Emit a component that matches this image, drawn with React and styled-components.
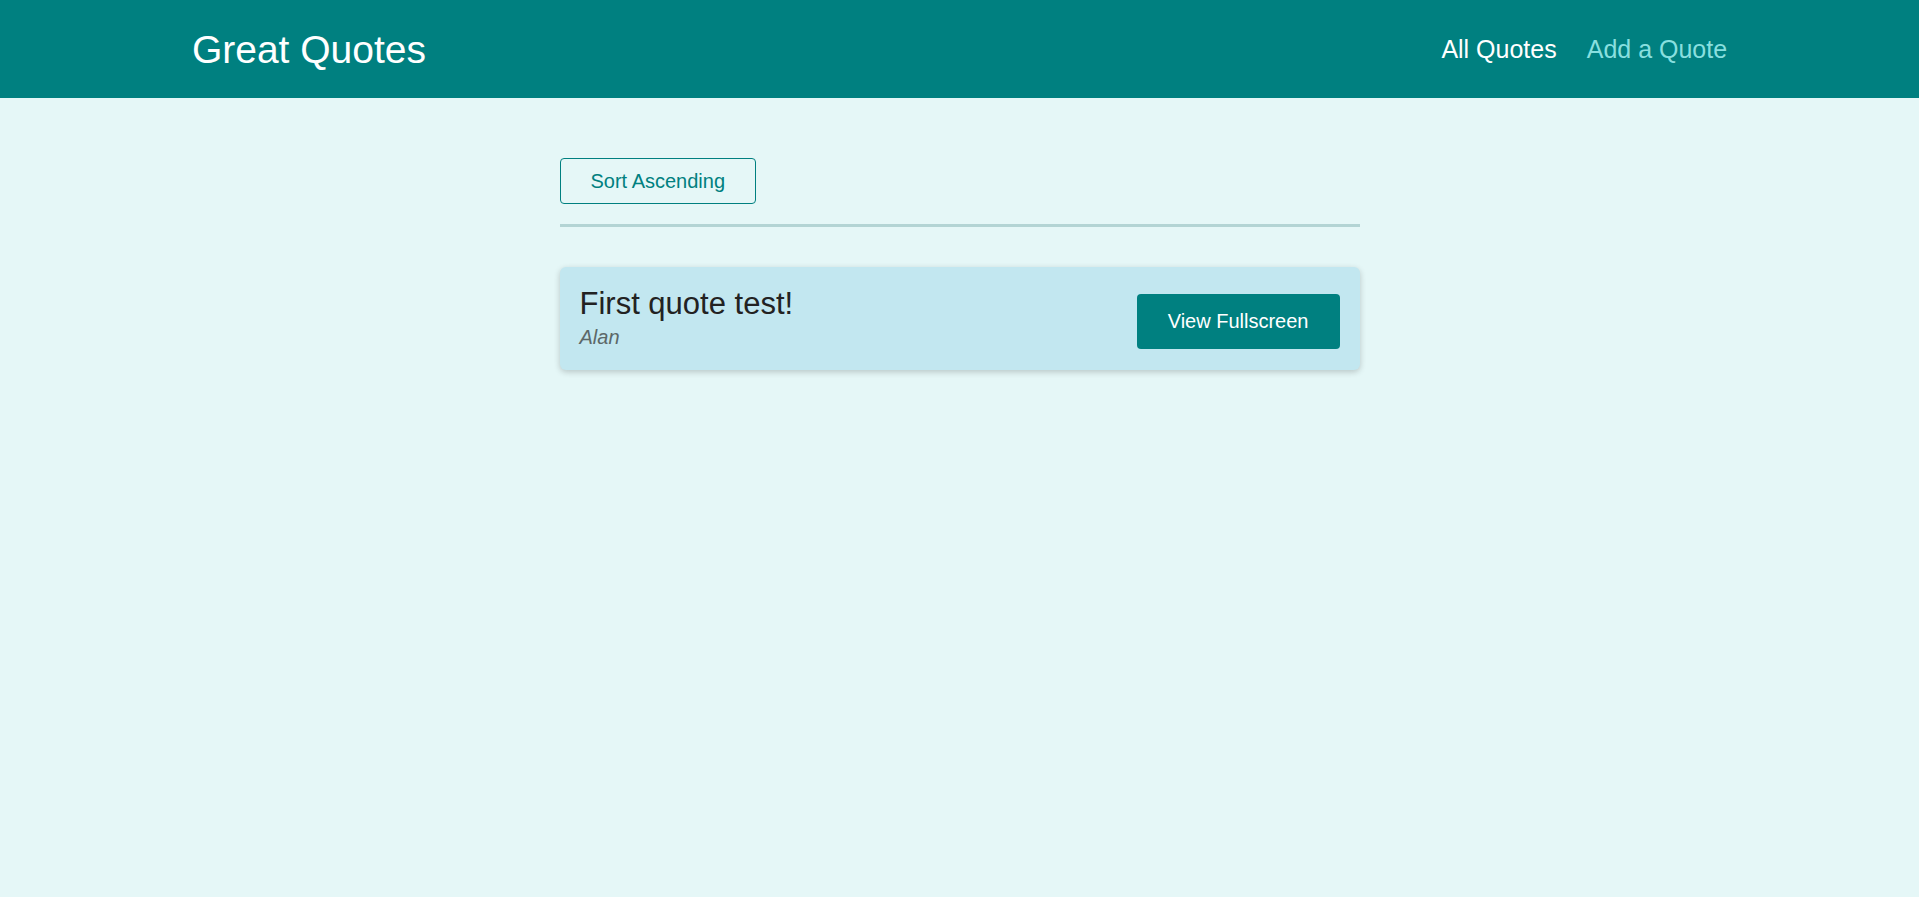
import styled, { createGlobalStyle } from "styled-components";

const GlobalStyle = createGlobalStyle`
  * {
    box-sizing: border-box;
  }

  html,
  body {
    margin: 0;
    min-height: 100%;
  }

  body {
    font-family: "Liberation Sans", Arial, sans-serif;
    background-color: #e5f7f7;
  }
`;

const Header = styled.header`
  height: 98px;
  background-color: #008080;
  padding: 0 10%;
  display: flex;
  justify-content: space-between;
  align-items: center;
`;

const Logo = styled.div`
  color: white;
  font-size: 39px;
  line-height: 1;
`;

const Nav = styled.nav`
  display: flex;
  gap: 30px;
`;

const NavLink = styled.a`
  font-size: 25px;
  text-decoration: none;
  cursor: pointer;
  color: ${(props) => (props.active ? "white" : "#88dfdf")};
`;

const Main = styled.main`
  width: 800px;
  margin: 60px auto 0;
`;

const Sorting = styled.div`
  padding-bottom: 20px;
  border-bottom: 3px solid #b3d4d4;
  margin-bottom: 40px;
`;

const OutlineButton = styled.button`
  font: inherit;
  font-size: 20px;
  line-height: 24px;
  color: #008080;
  background: transparent;
  border: 1px solid #008080;
  border-radius: 4px;
  padding: 10px 30px;
  cursor: pointer;
`;

const QuoteList = styled.ul`
  list-style: none;
  margin: 0;
  padding: 0;
`;

const QuoteItem = styled.li`
  display: flex;
  justify-content: space-between;
  align-items: flex-end;
  background-color: #c2e7f0;
  border-radius: 6px;
  padding: 19px 20px 21px 20px;
  box-shadow: 0 2px 6px rgba(0, 0, 0, 0.2);
  margin-bottom: 20px;
`;

const Figure = styled.figure`
  margin: 0;
`;

const QuoteText = styled.blockquote`
  margin: 0 0 4px 0;
  font-size: 31px;
  color: #222;
`;

const Author = styled.figcaption`
  font-size: 20px;
  font-style: italic;
  color: #5c6868;
`;

const SolidButton = styled.a`
  display: inline-block;
  font-size: 20px;
  line-height: 23px;
  color: white;
  background-color: #008080;
  border-radius: 4px;
  padding: 16px 31px;
  text-decoration: none;
  cursor: pointer;
`;

const quotes = [{ id: "q1", text: "First quote test!", author: "Alan" }];

function App() {
  return (
    <>
      <GlobalStyle />
      <Header>
        <Logo>Great Quotes</Logo>
        <Nav>
          <NavLink active>All Quotes</NavLink>
          <NavLink>Add a Quote</NavLink>
        </Nav>
      </Header>
      <Main>
        <Sorting>
          <OutlineButton>Sort Ascending</OutlineButton>
        </Sorting>
        <QuoteList>
          {quotes.map((q) => (
            <QuoteItem key={q.id}>
              <Figure>
                <QuoteText>{q.text}</QuoteText>
                <Author>{q.author}</Author>
              </Figure>
              <SolidButton>View Fullscreen</SolidButton>
            </QuoteItem>
          ))}
        </QuoteList>
      </Main>
    </>
  );
}

export default App;
